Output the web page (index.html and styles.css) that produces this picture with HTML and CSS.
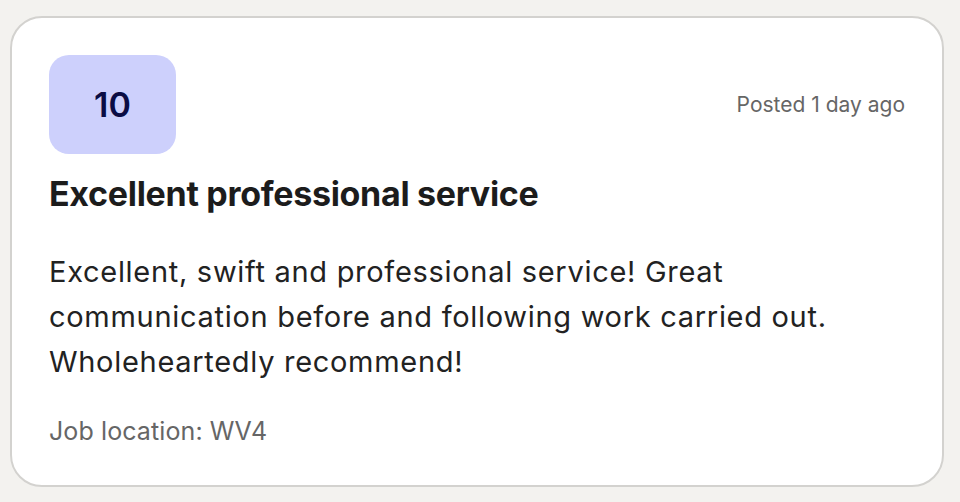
FILE: index.html
```html
<!DOCTYPE html>
<html>
<head>
<meta charset="utf-8">
<link rel="stylesheet" href="styles.css">
</head>
<body>
<div class="card">
  <div class="top">
    <div class="score">10</div>
    <div class="posted">Posted 1 day ago</div>
  </div>
  <h2 class="title">Excellent professional service</h2>
  <p class="body">Excellent, swift and professional service! Great communication before and following work carried out. Wholeheartedly recommend!</p>
  <div class="loc">Job location: WV4</div>
</div>
</body>
</html>
```
FILE: styles.css
```css
html, body { margin: 0; padding: 0; }
body {
  background: #f3f2ef;
  font-family: Inter, "Noto Sans", sans-serif;
  width: 960px;
  height: 502px;
  overflow: hidden;
}
.card {
  box-sizing: border-box;
  margin: 16px 0 0 10px;
  width: 934px;
  height: 471px;
  background: #fff;
  border: 2px solid #d3d2cf;
  border-radius: 32px;
  padding: 37px 37px 0 37px;
}
.top {
  display: flex;
  justify-content: space-between;
  align-items: center;
}
.score {
  width: 127px;
  height: 99px;
  border-radius: 20px;
  background: #cdd0fc;
  color: #0b0c44;
  font-size: 34px;
  font-weight: 600;
  display: flex;
  align-items: center;
  justify-content: center;
  letter-spacing: 0;
}
.posted {
  font-size: 21px;
  color: #666;
  letter-spacing: 0;
}
.title {
  margin: 20px 0 0 0;
  font-size: 34px;
  line-height: 40px;
  font-weight: 700;
  color: #1c1c1c;
  letter-spacing: -0.3px;
}
.body {
  margin: 35px 0 0 0;
  font-size: 29px;
  line-height: 45px;
  color: #222;
  letter-spacing: 0.7px;
  max-width: 820px;
}
.loc {
  margin-top: 32px;
  font-size: 25px;
  line-height: 30px;
  color: #666;
  letter-spacing: 0.1px;
}
```
